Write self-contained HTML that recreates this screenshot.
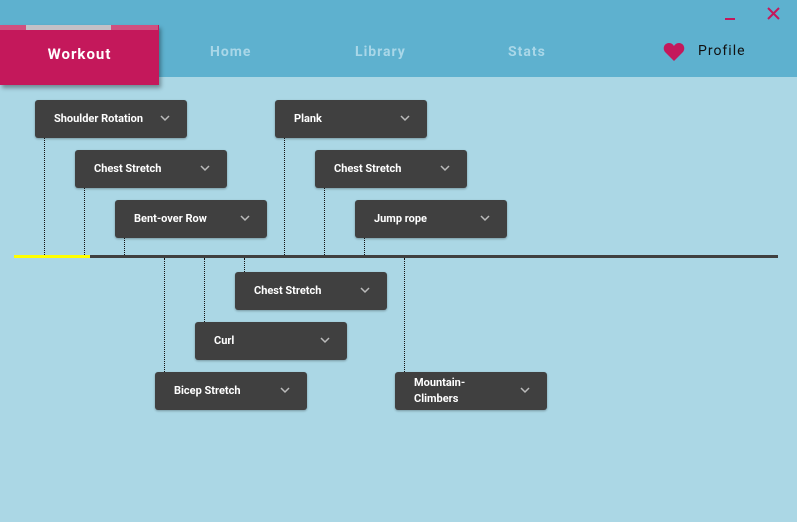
<!DOCTYPE html>
<html><head><style>
*{margin:0;padding:0;box-sizing:border-box}
body{width:797px;height:522px;background:#abd7e5;font-family:Roboto,"Liberation Sans",sans-serif;position:relative;overflow:hidden}
.hdr{position:absolute;left:0;top:0;width:797px;height:77px;background:#5eb1cf}
.tab{position:absolute;top:44px;font-size:14px;font-weight:bold;color:#a9d7e8;letter-spacing:1px}
.wk{position:absolute;left:0;top:25px;width:159px;height:60px;background:#c4185b;box-shadow:2px 3px 4px rgba(0,0,0,.35);color:#fff;font-weight:bold;font-size:15px;letter-spacing:1px;text-align:center;line-height:58px}
.wk:before{content:"";position:absolute;left:0;top:0;width:158px;height:5px;background:#d0507f}
.wk:after{content:"";position:absolute;left:26px;top:0;width:85px;height:5px;background:#c3c0c6}
.b{position:absolute;width:152px;height:38px;background:#404040;border-radius:3px;box-shadow:0 1px 2px rgba(0,0,0,.3);color:#fff;font-size:11px;font-weight:bold;padding-left:19px;display:flex;align-items:center;line-height:16px}
.b svg{position:absolute;left:125px;top:15px}
.v{position:absolute;width:0;border-left:1px dotted #111}
</style></head><body>
<div class="hdr"></div>
<div class="wk">Workout</div>
<div class="tab" style="left:210px">Home</div>
<div class="tab" style="left:355px">Library</div>
<div class="tab" style="left:508px">Stats</div>
<svg style="position:absolute;left:663px;top:42px" width="22" height="20" viewBox="0 0 22 20"><path d="M11 19 L2.5 10.5 C-1 7 1 1 6 1 C8.5 1 10 2.5 11 4 C12 2.5 13.5 1 16 1 C21 1 23 7 19.5 10.5 Z" fill="#c4185b"/></svg>
<div style="position:absolute;left:698px;top:43px;font-size:14px;color:#111;letter-spacing:1px">Profile</div>
<div style="position:absolute;left:725px;top:18px;width:10px;height:2px;background:#c4185b"></div>
<svg style="position:absolute;left:767px;top:7px" width="13" height="13" viewBox="0 0 13 13"><path d="M1 1L12 12M12 1L1 12" stroke="#c4185b" stroke-width="2"/></svg>

<div style="position:absolute;left:14px;top:255px;width:764px;height:3px;background:#404040"></div>
<div style="position:absolute;left:14px;top:255px;width:76px;height:3px;background:#ffff00"></div>

<div class="v" style="left:44px;top:138px;height:117px"></div>
<div class="v" style="left:84px;top:188px;height:67px"></div>
<div class="v" style="left:124px;top:238px;height:17px"></div>
<div class="v" style="left:284px;top:138px;height:117px"></div>
<div class="v" style="left:324px;top:188px;height:67px"></div>
<div class="v" style="left:364px;top:238px;height:17px"></div>
<div class="v" style="left:164px;top:258px;height:114px"></div>
<div class="v" style="left:204px;top:258px;height:64px"></div>
<div class="v" style="left:244px;top:258px;height:14px"></div>
<div class="v" style="left:404px;top:258px;height:114px"></div>

<div class="b" style="left:35px;top:100px">Shoulder Rotation<svg width="10" height="7"><path d="M1 1L5 5L9 1" stroke="#bbb" stroke-width="1.5" fill="none"/></svg></div>
<div class="b" style="left:75px;top:150px">Chest Stretch<svg width="10" height="7"><path d="M1 1L5 5L9 1" stroke="#bbb" stroke-width="1.5" fill="none"/></svg></div>
<div class="b" style="left:115px;top:200px">Bent-over Row<svg width="10" height="7"><path d="M1 1L5 5L9 1" stroke="#bbb" stroke-width="1.5" fill="none"/></svg></div>
<div class="b" style="left:275px;top:100px">Plank<svg width="10" height="7"><path d="M1 1L5 5L9 1" stroke="#bbb" stroke-width="1.5" fill="none"/></svg></div>
<div class="b" style="left:315px;top:150px">Chest Stretch<svg width="10" height="7"><path d="M1 1L5 5L9 1" stroke="#bbb" stroke-width="1.5" fill="none"/></svg></div>
<div class="b" style="left:355px;top:200px">Jump rope<svg width="10" height="7"><path d="M1 1L5 5L9 1" stroke="#bbb" stroke-width="1.5" fill="none"/></svg></div>
<div class="b" style="left:235px;top:272px">Chest Stretch<svg width="10" height="7"><path d="M1 1L5 5L9 1" stroke="#bbb" stroke-width="1.5" fill="none"/></svg></div>
<div class="b" style="left:195px;top:322px">Curl<svg width="10" height="7"><path d="M1 1L5 5L9 1" stroke="#bbb" stroke-width="1.5" fill="none"/></svg></div>
<div class="b" style="left:155px;top:372px">Bicep Stretch<svg width="10" height="7"><path d="M1 1L5 5L9 1" stroke="#bbb" stroke-width="1.5" fill="none"/></svg></div>
<div class="b" style="left:395px;top:372px">Mountain-<br>Climbers<svg width="10" height="7"><path d="M1 1L5 5L9 1" stroke="#bbb" stroke-width="1.5" fill="none"/></svg></div>
</body></html>
